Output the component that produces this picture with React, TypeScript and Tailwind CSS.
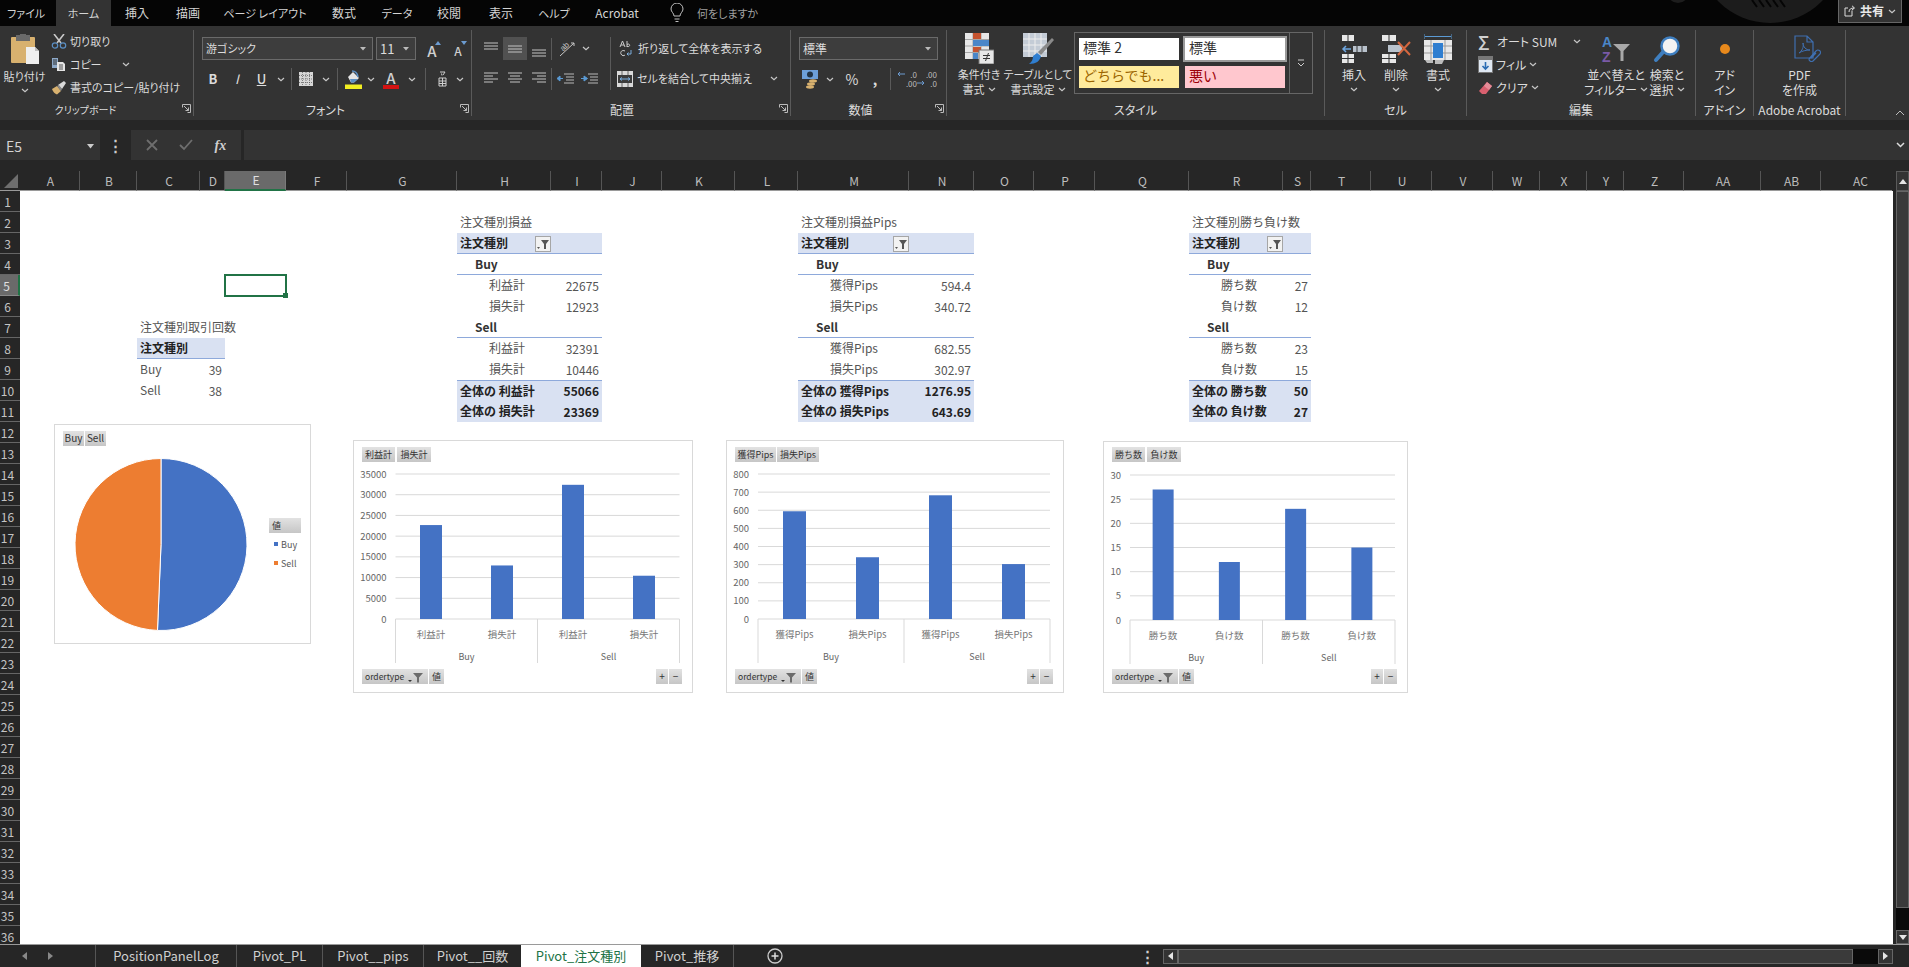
import type { ReactNode } from 'react';

const COLUMNS = ['A','B','C','D','E','F','G','H','I','J','K','L','M','N','O','P','Q','R','S','T','U','V','W','X','Y','Z','AA','AB','AC'];
const ROWS = Array.from({ length: 36 }, (_, i) => i + 1);
const COL_GRID = 'grid-cols-[60px_57px_63px_25px_61px_61px_110px_94px_51px_60px_73px_63px_111px_65px_60px_61px_94px_94px_28px_60px_61px_61px_47px_47px_37px_60px_77px_60px_71px]';

// ---- small ribbon parts ----
function Chevron({ className = '' }: { className?: string }) {
  return (
    <svg width="8" height="5" viewBox="0 0 8 5" className={`shrink-0 ${className}`}>
      <path d="M1 1l3 2.6L7 1" fill="none" stroke="#c8c8c8" strokeWidth="1.2" />
    </svg>
  );
}

function Launcher() {
  return (
    <svg width="9" height="9" viewBox="0 0 9 9" className="absolute bottom-[3px] right-[2px]">
      <path d="M.5 3.5V.5h8v8h-3M2 2l4.5 4.5M6.5 3.5v3h-3" fill="none" stroke="#bbb" strokeWidth="1" />
    </svg>
  );
}

function Group({ width, label, children, labelClass = 'text-[12px]' }: { width: string; label: string; children: ReactNode; labelClass?: string }) {
  return (
    <section className={`relative flex shrink-0 flex-col border-r border-[#5a5a5a] ${width}`}>
      <div className="flex h-[72px]">{children}</div>
      <div className={`h-[14px] whitespace-nowrap text-center leading-[15px] ${labelClass}`}>{label}</div>
    </section>
  );
}

function LargeButton({ width, icon, line1, line2, chevron = true }: { width: string; icon: ReactNode; line1: string; line2?: string; chevron?: boolean }) {
  return (
    <div className={`flex shrink-0 flex-col items-center ${width}`}>
      <div className="flex h-[37px] items-center justify-center">{icon}</div>
      <div className="h-[15px] whitespace-nowrap leading-[15px]">{line1}</div>
      <div className="flex h-[15px] items-center gap-[3px] whitespace-nowrap leading-[15px]">
        {line2}
        {chevron && <Chevron />}
      </div>
    </div>
  );
}

function Combo({ width, text, textClass = '' }: { width: string; text: string; textClass?: string }) {
  return (
    <div className={`flex h-[23px] shrink-0 items-center justify-between border border-[#6a6a6a] bg-[#3d3d3d] pl-[3px] pr-[6px] ${width}`}>
      <span className={textClass}>{text}</span>
      <svg width="6" height="4" viewBox="0 0 6 4"><path d="M0 0h6L3 3.5z" fill="#bbb" /></svg>
    </div>
  );
}

function Cell({ width, children, className = '' }: { width: string; children: ReactNode; className?: string }) {
  return <div className={`flex h-[22px] shrink-0 items-center justify-center ${width} ${className}`}>{children}</div>;
}

function Sep({ height = 'h-[22px]' }: { height?: string }) {
  return <div className={`w-px shrink-0 bg-[#5a5a5a] ${height}`} />;
}

function AlignIcon({ kind }: { kind: 'top' | 'mid' | 'bottom' | 'left' | 'center' | 'right' }) {
  const paths = {
    top: 'M1 3h14M1 6h14M1 9h14',
    mid: 'M1 6h14M1 9h14M1 12h14',
    bottom: 'M1 10h14M1 13h14M1 16h14',
    left: 'M1 3h14M1 6h9M1 9h14M1 12h9',
    center: 'M1 3h14M3 6h10M1 9h14M3 12h10',
    right: 'M1 3h14M6 6h9M1 9h14M6 12h9',
  };
  return (
    <svg width="16" height="17" viewBox="0 0 16 17">
      <path d={paths[kind]} stroke="#c4c4c4" strokeWidth="1" fill="none" />
    </svg>
  );
}

function IndentIcon({ flip }: { flip?: boolean }) {
  return (
    <svg width="17" height="14" viewBox="0 0 17 14">
      <path d="M7 2h10M9 5h8M9 8h8M7 11h10" stroke="#b8b8b8" strokeWidth="1" />
      <path d={flip ? 'M0 6.5h3V4l3.500 2.500L3 9V6.500z' : 'M6 6.500H3V4L0 6.500 3 9V6.500z'} fill="#5b9bd5" stroke="#5b9bd5" />
    </svg>
  );
}

function PasteIcon() {
  return (
    <svg width="30" height="31" viewBox="0 0 30 31">
      <rect x="1" y="3" width="24" height="26" rx="1" fill="#d8b16f" />
      <rect x="6" y="1" width="14" height="6" fill="#6a6a6a" />
      <rect x="10" y="0" width="6" height="3" fill="#6a6a6a" />
      <path d="M16 13h9l4 4v13H16z" fill="#efefef" />
      <path d="M25 13v4h4" fill="#bdbdbd" />
    </svg>
  );
}

function ScissorsIcon() {
  return (
    <svg width="16" height="15" viewBox="0 0 16 15">
      <path d="M3 0l7 9M13 0L6 9" stroke="#c9c9c9" strokeWidth="1.6" fill="none" />
      <circle cx="4" cy="11.500" r="2.700" fill="none" stroke="#5b8fc4" strokeWidth="1.200" />
      <circle cx="12" cy="11.500" r="2.700" fill="none" stroke="#5b8fc4" strokeWidth="1.200" />
    </svg>
  );
}

function CopyIcon() {
  return (
    <svg width="15" height="15" viewBox="0 0 15 15">
      <path d="M1 1h6v10H1z" fill="#8da9c9" />
      <path d="M2 3h4M2 5h4M2 7h4" stroke="#333" />
      <path d="M6 5h6l2 2v7H6z" fill="#e5e5e5" />
      <path d="M8 8h4M8 10h4M8 12h4" stroke="#555" />
    </svg>
  );
}

function BrushIcon() {
  return (
    <svg width="16" height="15" viewBox="0 0 16 15">
      <path d="M1 9l5-3 4 5-4 3.500C4 14 2 12 1 9z" fill="#d8b16f" />
      <path d="M7 5l6-4 2 2-4 6z" fill="#d9d9d9" />
      <path d="M6 6l4 5 1-2-3-4z" fill="#888" />
    </svg>
  );
}

function FontSizeIcon({ up }: { up?: boolean }) {
  return (
    <span className="relative flex h-[20px] w-[20px] items-end justify-center">
      <span className={`${up ? 'text-[15px]' : 'text-[12px]'} font-medium leading-[17px] text-[#cfcfcf]`}>A</span>
      <svg width="6" height="4" viewBox="0 0 6 4" className="absolute right-[1px] top-[2px]">
        <path d={up ? 'M0 4h6L3 0z' : 'M0 0h6L3 4z'} fill="#6c9bd0" />
      </svg>
    </span>
  );
}

function BorderIcon() {
  return (
    <svg width="14" height="14" viewBox="0 0 14 14">
      <rect width="14" height="14" fill="#d6d6d6" />
      <path d="M0 3.500h14M0 7h14M0 10.500h14M3.500 0v14M7 0v14M10.500 0v14" stroke="#555" strokeDasharray="1 1" strokeWidth=".7" />
    </svg>
  );
}

function FillIcon() {
  return (
    <svg width="17" height="19" viewBox="0 0 17 19">
      <path d="M3 7l5-5 6 6-5 4.500H6z" fill="#e5e5e5" />
      <path d="M7 1q5 0 6 6" stroke="#5b8fc4" strokeWidth="1.600" fill="none" />
      <path d="M5 9h8l-4 3.500H6z" fill="#5b8fc4" />
      <rect y="14.500" width="17" height="4.500" fill="#f2ee22" />
    </svg>
  );
}

function FontColorIcon() {
  return (
    <span className="relative flex h-[19px] w-[16px] flex-col items-center">
      <span className="text-[15px] font-medium leading-[15px] text-[#cfcfcf]">A</span>
      <span className="absolute bottom-0 h-[4px] w-[16px] bg-[#d51313]" />
    </span>
  );
}

function PhoneticIcon() {
  return (
    <svg width="9" height="16" viewBox="0 0 9 16">
      <path d="M2 1h5L5 4M3.500 2.500l.5 2" stroke="#cfcfcf" fill="none" />
      <path d="M1 7h7v8H1zM1 10h7M1 12.500h7M4.500 7v8" stroke="#cfcfcf" fill="none" />
    </svg>
  );
}

function WrapIcon() {
  return (
    <svg width="14" height="18" viewBox="0 0 14 18">
      <path d="M1 7l2.500-6L6 7M2 5h3" stroke="#ccc" fill="none" />
      <path d="M8 1v6M8 4.500c3-2 4 3 0 2" stroke="#ccc" fill="none" />
      <path d="M6 11c-3-1.500-5 1-4 3s3 2 4 1" stroke="#ccc" fill="none" />
      <path d="M12 10v4H8M9.500 12.500L8 14l1.500 1.500" stroke="#7daedc" fill="none" />
    </svg>
  );
}

function MergeIcon() {
  return (
    <svg width="16" height="16" viewBox="0 0 16 16">
      <rect width="16" height="16" fill="#d9d9d9" />
      <rect x="1" y="4" width="14" height="8" fill="#3c3c3c" />
      <path d="M5 0v4M11 0v4M5 12v4M11 12v4" stroke="#666" />
      <path d="M3 8h10M3 8l2-1.500M3 8l2 1.500M13 8l-2-1.500M13 8l-2 1.500" stroke="#79aee0" fill="none" />
    </svg>
  );
}

function OrientIcon() {
  return (
    <svg width="18" height="17" viewBox="0 0 18 17" className="overflow-visible">
      <text x="3" y="10" fontSize="8" fill="#c8c8c8" fontFamily="Liberation Sans" transform="rotate(-45 6 8)">ab</text>
      <path d="M2 16L16 3M16 3h-3M16 3v3" stroke="#c8c8c8" fill="none" />
    </svg>
  );
}

function CurrencyIcon() {
  return (
    <svg width="18" height="19" viewBox="0 0 18 19">
      <rect width="16" height="9" fill="#6d9fd8" />
      <circle cx="8" cy="4.500" r="3" fill="#234" />
      <ellipse cx="11" cy="11" rx="4" ry="1.700" fill="#d8b16f" />
      <ellipse cx="9" cy="14" rx="4" ry="1.700" fill="#d8b16f" />
      <ellipse cx="8" cy="17" rx="4" ry="1.700" fill="#d8b16f" />
    </svg>
  );
}

function DecimalIcon({ more }: { more?: boolean }) {
  return (
    <span className="relative block h-[20px] w-[20px] text-[8px] leading-[9px] text-[#bdbdbd]">
      <span className="absolute right-0 top-[1px]">{more ? '.00' : '.0'}</span>
      <span className="absolute right-0 top-[10px]">{more ? '.0' : '.00'}</span>
      <svg width="8" height="6" viewBox="0 0 8 6" className={`absolute left-0 ${more ? 'top-[11px]' : 'top-[2px]'}`}>
        <path d={more ? 'M0 3h7M5 1l2 2-2 2' : 'M8 3H1M3 1L1 3l2 2'} stroke="#6c9bd0" fill="none" />
      </svg>
    </span>
  );
}

function CondFormatIcon() {
  return (
    <svg width="30" height="31" viewBox="0 0 30 31">
      <rect x="1" width="24" height="26" fill="#e7e7e7" />
      <path d="M9 0v26M17 0v26M1 6.500h24M1 13h24M1 19.500h24" stroke="#a5a5a5" />
      <rect x="9" y="0" width="8" height="6" fill="#c5532f" />
      <rect x="9" y="7" width="16" height="6" fill="#4a86c8" />
      <rect x="9" y="14" width="8" height="5" fill="#c5532f" />
      <rect x="9" y="20" width="5" height="6" fill="#4a86c8" />
      <rect x="15" y="17" width="15" height="14" fill="#e7e7e7" stroke="#777" />
      <path d="M19 22.500h7M19 25.500h7M24.500 20l-3 8" stroke="#333" fill="none" />
    </svg>
  );
}

function TableFormatIcon() {
  return (
    <svg width="31" height="32" viewBox="0 0 31 32">
      <rect width="24" height="24" fill="#c4ccd6" />
      <path d="M6 0v24M12 0v24M18 0v24M0 6h24M0 12h24M0 18h24" stroke="#eee" />
      <path d="M29 5l2 2-13 15-3-3z" fill="#8a8a8a" />
      <path d="M14 20l4 3c-1 5-5 8-12 8 3-2 4-5 4-8z" fill="#2f7ed0" />
    </svg>
  );
}

function InsertIcon() {
  return (
    <svg width="26" height="28" viewBox="0 0 26 28">
      <path d="M1 0h12v6H1zM1 19h12v9H1z" fill="#e8e8e8" />
      <path d="M7 0v6M1 23.500h12M7 19v9" stroke="#333" />
      <path d="M12 11h14v6H12z" fill="#b9c2cc" />
      <path d="M16 11v6M21 11v6" stroke="#333" />
      <path d="M10 14H2M5 11l-3 3 3 3" stroke="#6ea6e0" strokeWidth="1.500" fill="none" />
    </svg>
  );
}

function DeleteIcon() {
  return (
    <svg width="30" height="28" viewBox="0 0 30 28">
      <path d="M1 0h14v6H1zM1 19h14v9H1z" fill="#e8e8e8" />
      <path d="M8 0v6M1 23.500h14M8 19v9" stroke="#333" />
      <path d="M7 10h14v7H7z" fill="#b9c2cc" />
      <path d="M17 7l12 13M29 7L17 20" stroke="#d4673f" strokeWidth="2" />
    </svg>
  );
}

function CellFormatIcon() {
  return (
    <svg width="28" height="32" viewBox="0 0 28 32">
      <path d="M0 1v5M28 1v5M1 3.500h26" stroke="#5b9bd5" />
      <rect y="7" width="28" height="20" fill="#e8e8e8" />
      <path d="M7 7v20M21 7v20M0 13h28M0 20h28" stroke="#999" />
      <rect x="9" y="10" width="10" height="15" fill="#2f7ed0" />
      <path d="M1 27h8v3H3zM11 27h9l-2 4h-7z" fill="#bbb" />
    </svg>
  );
}

function FillDownIcon() {
  return (
    <svg width="15" height="17" viewBox="0 0 15 17">
      <rect width="15" height="17" fill="#777" />
      <rect x="1" y="4" width="13" height="12" fill="#dfe8f3" />
      <path d="M7.500 6v7M4.500 10l3 3 3-3" stroke="#2b6cb3" strokeWidth="1.600" fill="none" />
    </svg>
  );
}

function EraserIcon() {
  return (
    <svg width="15" height="14" viewBox="0 0 15 14">
      <path d="M9 1l5 4-6 8H4L1 10z" fill="#d9606f" />
      <path d="M9 1l5 4-3 4-5-4z" fill="#e58b97" />
    </svg>
  );
}

function SortIcon() {
  return (
    <svg width="30" height="30" viewBox="0 0 30 30" className="overflow-visible">
      <text x="1" y="13" fontSize="14" fontWeight="700" fontFamily="Liberation Sans" fill="#4a86c8">A</text>
      <text x="1" y="28" fontSize="14" fontWeight="700" fontFamily="Liberation Sans" fill="#7a5aa6">Z</text>
      <path d="M12 10h17l-6.500 7v10h-3V17z" fill="#a8a8a8" />
    </svg>
  );
}

function FindIcon() {
  return (
    <svg width="28" height="28" viewBox="0 0 28 28">
      <path d="M3 25l8-9" stroke="#3f7fc0" strokeWidth="4" strokeLinecap="round" />
      <circle cx="17" cy="11" r="8.500" fill="#f2f2f2" stroke="#3f7fc0" strokeWidth="2.500" />
    </svg>
  );
}

function PdfIcon() {
  return (
    <svg width="27" height="27" viewBox="0 0 27 27">
      <path d="M1 1h12l6 6v16H1zM13 1v6h6" fill="none" stroke="#3f6fb0" strokeWidth="1.200" />
      <path d="M5 18c3-2 5-6 4-10 0 4 3 7 7 7-4 0-8 1-11 3z" fill="none" stroke="#3f6fb0" />
      <path d="M15 24l7-8a2.500 2.500 0 0 1 4 3l-7 7a2.500 2.500 0 0 1-4-2zM17 23l5-5" fill="none" stroke="#3f6fb0" strokeWidth="1.200" />
    </svg>
  );
}

// ---- ribbon ----
function TitleTabs() {
  const tabs = [
    ['挿入', 'w-[52px]'], ['描画', 'w-[50px]'], ['ページ レイアウト', 'w-[104px] text-[11px]'], ['数式', 'w-[54px]'], ['データ', 'w-[52px] text-[11px]'],
    ['校閲', 'w-[52px]'], ['表示', 'w-[52px]'], ['ヘルプ', 'w-[54px] text-[11px]'], ['Acrobat', 'w-[72px]'],
  ];
  return (
    <div className="relative flex h-[26px] shrink-0 items-center overflow-hidden bg-[#050505] text-[#d4d4d4]">
      <div className="w-[56px] pl-[7px] text-[11px]">ファイル</div>
      <div className="flex h-full w-[55px] items-center justify-center bg-[#333] text-[11px]">ホーム</div>
      {tabs.map(([label, width]) => (
        <div key={label} className={`whitespace-nowrap text-center ${width}`}>{label}</div>
      ))}
      <svg width="16" height="20" viewBox="0 0 16 20" className="ml-[16px]">
        <path d="M5 13c0-3-3-4-3-7a6 6 0 0 1 12 0c0 3-3 4-3 7zM5.500 16h5M6.500 18.500h3" fill="none" stroke="#c0c0c0" />
      </svg>
      <div className="ml-[12px] text-[11px] text-[#a0a0a0]">何をしますか</div>
      {/* 右上の背景模様 */}
      <svg width="240" height="26" viewBox="0 0 240 26" className="absolute left-[1660px] top-0">
        <circle cx="18" cy="-8" r="11" fill="#1d1d1d" />
        <circle cx="110" cy="-49.600" r="72.600" fill="#1c1c1c" />
        <path d="M92 0l5 7M99 0l5 7M106 0l5 7M113 0l5 7M120 0l5 7" stroke="#050505" strokeWidth="2" />
      </svg>
      <div className="absolute left-[1838px] top-0 flex h-[23px] w-[64px] items-center justify-center gap-[4px] border border-[#666] border-t-0 bg-[#333]">
        <svg width="12" height="12" viewBox="0 0 12 12">
          <path d="M8 5.500V11H1V3h3M5 7c0-3 2-4 5-4M8 .800L10.500 3 8 5" fill="none" stroke="#ddd" />
        </svg>
        <span className="font-bold text-[#e8e8e8]">共有</span>
        <Chevron />
      </div>
    </div>
  );
}

function Ribbon() {
  return (
    <div className="flex h-[94px] shrink-0 bg-[#333] pb-[4px] pt-[4px] text-[#dcdcdc]">
      <Group width="w-[194px] text-[11px]" label="クリップボード" labelClass="pr-[22px] text-[10px]">
        <div className="flex w-[50px] shrink-0 flex-col items-center">
          <div className="mt-[4px] flex h-[31px] items-center"><PasteIcon /></div>
          <div className="mt-[3px] whitespace-nowrap pr-[1px] leading-[16px]">貼り付け</div>
          <Chevron className="mt-[4px]" />
        </div>
        <div className="flex flex-col pl-[1px]">
          <div className="flex h-[23px] items-center gap-[3px]"><ScissorsIcon />切り取り</div>
          <div className="flex h-[23px] items-center gap-[4px]"><CopyIcon />コピー<Chevron className="ml-[16px]" /></div>
          <div className="flex h-[23px] items-center gap-[3px] whitespace-nowrap"><BrushIcon />書式のコピー/貼り付け</div>
        </div>
        <Launcher />
      </Group>

      <Group width="w-[278px]" label="フォント" labelClass="pr-[14px] text-[12px]">
        <div className="flex flex-col gap-[8px] pl-[8px] pt-[7px]">
          <div className="flex items-center gap-[3px]">
            <Combo width="w-[171px]" text="游ゴシック" textClass="text-[11px]" />
            <Combo width="w-[40px]" text="11" textClass="text-[13px]" />
            <Cell width="w-[26px]"><FontSizeIcon up /></Cell>
            <Cell width="w-[20px]"><FontSizeIcon /></Cell>
          </div>
          <div className="flex items-center">
            <Cell width="w-[22px]" className="font-bold text-[13px]">B</Cell>
            <Cell width="w-[26px]" className="text-[13px] italic">I</Cell>
            <Cell width="w-[23px]" className="text-[13px] font-medium underline">U</Cell>
            <Cell width="w-[16px]"><Chevron /></Cell>
            <Cell width="w-[4px]"><Sep /></Cell>
            <Cell width="w-[26px]"><BorderIcon /></Cell>
            <Cell width="w-[14px]"><Chevron /></Cell>
            <Cell width="w-[8px]"><Sep /></Cell>
            <Cell width="w-[24px]"><FillIcon /></Cell>
            <Cell width="w-[12px]"><Chevron /></Cell>
            <Cell width="w-[28px]"><FontColorIcon /></Cell>
            <Cell width="w-[14px]"><Chevron /></Cell>
            <Cell width="w-[12px]"><Sep /></Cell>
            <Cell width="w-[22px]"><PhoneticIcon /></Cell>
            <Cell width="w-[14px]"><Chevron /></Cell>
          </div>
        </div>
        <Launcher />
      </Group>

      <Group width="w-[319px]" label="配置" labelClass="pr-[18px] text-[12px]">
        <div className="flex flex-col gap-[7px] pl-[7px] pt-[7px]">
          <div className="flex h-[23px] items-center">
            <Cell width="w-[24px]"><AlignIcon kind="top" /></Cell>
            <Cell width="w-[24px]" className="!h-[23px] bg-[#515151]"><AlignIcon kind="mid" /></Cell>
            <Cell width="w-[24px]"><AlignIcon kind="bottom" /></Cell>
            <Sep />
            <Cell width="w-[30px]"><OrientIcon /></Cell>
            <Chevron />
          </div>
          <div className="flex h-[23px] items-center">
            <Cell width="w-[24px]"><AlignIcon kind="left" /></Cell>
            <Cell width="w-[24px]"><AlignIcon kind="center" /></Cell>
            <Cell width="w-[24px]"><AlignIcon kind="right" /></Cell>
            <Sep />
            <Cell width="w-[26px]"><IndentIcon /></Cell>
            <Cell width="w-[22px]"><IndentIcon flip /></Cell>
          </div>
        </div>
        <div className="ml-[10px] mt-[7px] h-[53px] w-px bg-[#5a5a5a]" />
        <div className="flex flex-col gap-[7px] pl-[6px] pt-[7px] text-[11px]">
          <div className="flex h-[23px] items-center gap-[5px] whitespace-nowrap pl-[2px]"><WrapIcon />折り返して全体を表示する</div>
          <div className="flex h-[23px] items-center gap-[4px] whitespace-nowrap"><MergeIcon />セルを結合して中央揃え<Chevron className="ml-[14px]" /></div>
        </div>
        <Launcher />
      </Group>

      <Group width="w-[156px]" label="数値" labelClass="pr-[16px] text-[12px]">
        <div className="flex flex-col gap-[8px] pl-[8px] pt-[7px]">
          <Combo width="w-[139px]" text="標準" />
          <div className="flex items-center">
            <Cell width="w-[24px]"><CurrencyIcon /></Cell>
            <Cell width="w-[14px]"><Chevron /></Cell>
            <Cell width="w-[30px]" className="text-[14px]">%</Cell>
            <Cell width="w-[16px]" className="font-bold text-[14px]">,</Cell>
            <Cell width="w-[14px]"><Sep /></Cell>
            <Cell width="w-[20px]"><DecimalIcon /></Cell>
            <Cell width="w-[20px]"><DecimalIcon more /></Cell>
          </div>
        </div>
        <Launcher />
      </Group>

      <Group width="w-[378px]" label="スタイル">
        <div className="flex pl-[6px] text-[11px]">
          <LargeButton width="w-[52px]" icon={<CondFormatIcon />} line1="条件付き" line2="書式" />
          <LargeButton width="w-[66px]" icon={<TableFormatIcon />} line1="テーブルとして" line2="書式設定" />
        </div>
        <div className="ml-[3px] mt-[2px] flex h-[62px] w-[239px] border border-[#666]">
          <div className="grid w-[214px] shrink-0 grid-cols-[100px_100px] grid-rows-[22px_22px] gap-x-[6px] gap-y-[6px] pl-[4px] pt-[5px] text-[14px] leading-[19px] [font-feature-settings:normal]">
            <div className="bg-white px-[4px] text-[#333]">標準 2</div>
            <div className="bg-white px-[4px] text-[#333] outline-2 outline-[#9a9a9a]">標準</div>
            <div className="bg-[#ffeb9c] px-[4px] text-[#9c6500]">どちらでも...</div>
            <div className="bg-[#ffc7ce] px-[4px] text-[#9c0006]">悪い</div>
          </div>
          <div className="flex flex-1 items-center justify-center border-l border-[#666]">
            <svg width="8" height="8" viewBox="0 0 8 8"><path d="M1 1h6M1 4l3 3 3-3" fill="none" stroke="#ccc" /></svg>
          </div>
        </div>
      </Group>

      <Group width="w-[142px]" label="セル">
        <div className="flex pl-[8px]">
          <LargeButton width="w-[42px]" icon={<InsertIcon />} line1="挿入" />
          <LargeButton width="w-[42px]" icon={<DeleteIcon />} line1="削除" />
          <LargeButton width="w-[42px]" icon={<CellFormatIcon />} line1="書式" />
        </div>
      </Group>

      <Group width="w-[229px]" label="編集">
        <div className="flex w-[120px] shrink-0 flex-col pl-[11px]">
          <div className="flex h-[23px] items-center gap-[3px] whitespace-nowrap">
            <span className="w-[16px] text-[19px] font-medium leading-[20px] text-[#d0d0d0]">Σ</span>オート SUM<Chevron className="ml-[13px]" />
          </div>
          <div className="flex h-[23px] items-center gap-[3px]"><FillDownIcon />フィル<Chevron /></div>
          <div className="flex h-[23px] items-center gap-[3px]"><EraserIcon />クリア<Chevron /></div>
        </div>
        <LargeButton width="w-[58px]" icon={<SortIcon />} line1="並べ替えと" line2="フィルター" />
        <LargeButton width="w-[44px]" icon={<FindIcon />} line1="検索と" line2="選択" />
      </Group>

      <Group width="w-[58px]" label="アドイン">
        <div className="flex w-full flex-col items-center">
          <div className="flex h-[37px] items-center">
            <span className="h-[10px] w-[10px] rounded-full bg-[#e8891c]" />
          </div>
          <div className="h-[15px] leading-[15px]">アド</div>
          <div className="h-[15px] leading-[15px]">イン</div>
        </div>
      </Group>

      <Group width="w-[92px]" label="Adobe Acrobat">
        <div className="flex w-full flex-col items-center">
          <div className="flex h-[37px] items-center pl-[16px]"><PdfIcon /></div>
          <div className="h-[15px] leading-[15px]">PDF</div>
          <div className="h-[15px] leading-[15px]">を作成</div>
        </div>
      </Group>

      <div className="flex flex-1 items-end justify-end pr-[4px]">
        <svg width="10" height="6" viewBox="0 0 10 6"><path d="M1 5l4-4 4 4" fill="none" stroke="#bbb" /></svg>
      </div>
    </div>
  );
}

function FormulaBar() {
  return (
    <div className="flex h-[51px] shrink-0 items-start bg-[#262626] pt-[10px]">
      <div className="flex h-[30px] w-[100px] items-center justify-between bg-[#333] pl-[6px] pr-[6px] pt-[2px] text-[14px] text-[#d4d4d4]">
        E5
        <svg width="7" height="5" viewBox="0 0 7 5"><path d="M0 0h7L3.500 4.500z" fill="#ccc" /></svg>
      </div>
      <div className="flex h-[30px] w-[31px] items-center justify-center text-[15px] font-bold text-[#ccc]">⋮</div>
      <div className="flex h-[30px] w-[110px] items-center justify-around bg-[#333] px-[4px]">
        <svg width="12" height="12" viewBox="0 0 12 12"><path d="M1 1l10 10M11 1L1 11" stroke="#6e6e6e" strokeWidth="1.800" /></svg>
        <svg width="14" height="12" viewBox="0 0 14 12"><path d="M1 6l4 4 8-9" fill="none" stroke="#6e6e6e" strokeWidth="1.800" /></svg>
        <span className="font-['Liberation_Serif',serif] text-[14px] font-bold italic text-[#cfcfcf]">fx</span>
      </div>
      <div className="ml-[3px] flex h-[30px] flex-1 items-center justify-end bg-[#333] pr-[4px]">
        <svg width="9" height="6" viewBox="0 0 9 6"><path d="M1 1l3.500 3.500L8 1" fill="none" stroke="#ddd" strokeWidth="1.500" /></svg>
      </div>
    </div>
  );
}

// ---- pivots ----
type PivotGroup = { name: string; rows: [string, string][] };

function FilterButton() {
  return (
    <span className="absolute right-0 top-[3px] flex h-[16px] w-[16px] items-center justify-center border border-[#a6a6a6] bg-[#f2f2f2]">
      <svg width="12" height="11" viewBox="0 0 12 11">
        <path d="M4 1h8L9 5v5H7V5z" fill="#555" />
        <path d="M0 8h3L1.500 10z" fill="#555" />
      </svg>
    </span>
  );
}

function PivotRow({ left, right, className = '', leftClass = 'pl-[3px]', filter }: { left: string; right?: string; className?: string; leftClass?: string; filter?: boolean }) {
  return (
    <div className={`col-span-2 grid grid-cols-subgrid items-center whitespace-nowrap leading-[20px] ${className}`}>
      <div className={`relative h-full ${leftClass}`}>
        {left}
        {filter && <FilterButton />}
      </div>
      <div className="pr-[3px] text-right">{right}</div>
    </div>
  );
}

const HEAD = 'bg-[#d9e1f2] border-b border-[#8ea9db] font-bold text-[#222]';

function Pivot({ place, title, groups, totals }: { place: string; title: string; groups: PivotGroup[]; totals: [string, string][] }) {
  return (
    <div className={`grid grid-cols-subgrid grid-rows-subgrid text-[12px] text-[#555] ${place}`}>
      <PivotRow left={title} />
      <PivotRow left="注文種別" className={HEAD} filter />
      {groups.map((group) => (
        <div key={group.name} className="contents">
          <PivotRow left={group.name} className="border-b border-[#8ea9db] font-semibold text-[#333]" leftClass="pl-[18px]" />
          {group.rows.map(([label, value]) => (
            <PivotRow key={label} left={label} right={value} leftClass="pl-[32px]" />
          ))}
        </div>
      ))}
      {totals.map(([label, value], i) => (
        <PivotRow key={label} left={label} right={value} className={`bg-[#d9e1f2] font-bold text-[#222] ${i === 0 ? 'border-t border-[#8ea9db]' : ''}`} />
      ))}
    </div>
  );
}

// ---- charts ----
function FieldButton({ x, y, w, label, size = 9, anchor = 'middle' }: { x: number; y: number; w: number; label: string; size?: number; anchor?: 'middle' | 'start' }) {
  return (
    <g>
      <rect x={x} y={y} width={w} height={15} fill="url(#fieldButton)" />
      <text x={anchor === 'middle' ? x + w / 2 : x + 3} y={y + 11} fontSize={size} textAnchor={anchor} fill="#333">{label}</text>
    </g>
  );
}

function ButtonGradient() {
  return (
    <defs>
      <linearGradient id="fieldButton" x1="0" y1="0" x2="0" y2="1">
        <stop offset="0" stopColor="#e2e2e2" />
        <stop offset="1" stopColor="#c6c6c6" />
      </linearGradient>
    </defs>
  );
}

type BarChartProps = {
  place: string;
  frame: [number, number, number, number];
  plot: [number, number, number, number];
  ticks: string[];
  max: number;
  values: number[];
  labels: [string, string];
  barWidth: number;
  seriesButtons: [number, number, string][];
  footer: [number, number, number];
};

function BarChart({ place, frame, plot, ticks, max, values, labels, barWidth, seriesButtons, footer }: BarChartProps) {
  const [x0, y0, x1, y1] = frame;
  const [left, right, top, bottom] = plot;
  const cell = (right - left) / 4;
  const [ordertypeX, ordertypeW, plusX] = footer;
  const footY = y1 - 24;
  return (
    <div className={`absolute border border-[#d9d9d9] bg-white ${place}`}>
      <svg viewBox={`${x0 + 1} ${y0 + 1} ${x1 - x0 - 2} ${y1 - y0 - 2}`} className="block h-full w-full">
        <ButtonGradient />
        {seriesButtons.map(([x, w, label]) => (
          <FieldButton key={label} x={x} y={447} w={w} label={label} />
        ))}
        {ticks.map((tick, i) => {
          const y = bottom - ((bottom - top) * i) / (ticks.length - 1);
          return (
            <g key={tick}>
              <line x1={left} x2={right} y1={y} y2={y} stroke="#d9d9d9" />
              <text x={left - 9} y={y + 3.500} fontSize="9.500" textAnchor="end" fill="#666">{tick}</text>
            </g>
          );
        })}
        {values.map((value, i) => {
          const h = (value / max) * (bottom - top);
          return <rect key={i} x={left + cell * (i + 0.5) - barWidth / 2} y={bottom - h} width={barWidth} height={h} fill="#4472c4" />;
        })}
        <path d={`M${left} ${bottom}V${bottom + 44}M${left + cell * 2} ${bottom}V${bottom + 44}M${right} ${bottom}V${bottom + 44}`} stroke="#d9d9d9" fill="none" />
        {[0, 1, 2, 3].map((i) => (
          <text key={i} x={left + cell * (i + 0.5)} y={bottom + 19} fontSize="9.500" textAnchor="middle" fill="#777">{labels[i % 2]}</text>
        ))}
        <text x={left + cell} y={bottom + 41} fontSize="9" textAnchor="middle" fill="#666">Buy</text>
        <text x={left + cell * 3} y={bottom + 41} fontSize="9" textAnchor="middle" fill="#666">Sell</text>
        <FieldButton x={ordertypeX} y={footY} w={ordertypeW} label="ordertype" size={8.5} anchor="start" />
        <path d={`M${ordertypeX + ordertypeW - 15} ${footY + 4}h10l-4 4.500v5h-2v-5z`} fill="#6b6b6b" />
        <path d={`M${ordertypeX + ordertypeW - 20} ${footY + 11}h4l-2 2z`} fill="#333" />
        <FieldButton x={ordertypeX + ordertypeW + 1} y={footY} w={15} label="値" />
        <FieldButton x={plusX} y={footY} w={12} label="+" size={10} />
        <FieldButton x={plusX + 13} y={footY} w={13} label="−" size={10} />
      </svg>
    </div>
  );
}

function PieChart() {
  // 39 / 77 を上から時計回りに
  const cx = 161;
  const cy = 544.5;
  const r = 86;
  const angle = (39 / 77) * Math.PI * 2;
  const ex = cx + r * Math.sin(angle);
  const ey = cy - r * Math.cos(angle);
  return (
    <div className="absolute left-[34px] top-[233px] h-[220px] w-[257px] border border-[#d9d9d9] bg-white">
      <svg viewBox="55 425 255 218" className="block h-full w-full">
        <ButtonGradient />
        <FieldButton x={63} y={431} w={21} label="Buy" size={10} />
        <FieldButton x={85} y={431} w={21} label="Sell" size={10} />
        <path d={`M${cx} ${cy}L${cx} ${cy - r}A${r} ${r} 0 1 1 ${ex} ${ey}Z`} fill="#4472c4" stroke="#fff" />
        <path d={`M${cx} ${cy}L${ex} ${ey}A${r} ${r} 0 0 1 ${cx} ${cy - r}Z`} fill="#ed7d31" stroke="#fff" />
        <FieldButton x={269} y={518} w={32} label="値" anchor="start" />
        <rect x={274} y={542} width={4} height={4} fill="#4472c4" />
        <text x={281} y={548} fontSize="9" fill="#595959">Buy</text>
        <rect x={274} y={561} width={4} height={4} fill="#ed7d31" />
        <text x={281} y={567} fontSize="9" fill="#595959">Sell</text>
      </svg>
    </div>
  );
}

// ---- sheet ----
function ColumnHeader() {
  return (
    <div className="flex h-[20px] shrink-0 bg-[#262626]">
      <div className="flex w-[20px] shrink-0 items-end justify-end border-b border-[#9a9a9a] pb-[2px] pr-[2px]">
        <svg width="14" height="14" viewBox="0 0 14 14"><path d="M14 0v14H0z" fill="#6e6e6e" /></svg>
      </div>
      <div className={`grid flex-1 ${COL_GRID} justify-start`}>
        {COLUMNS.map((col) => (
          <div
            key={col}
            className={`flex items-center justify-center border-r pl-[2px] text-[12px] leading-none text-[#bdbdbd] ${col === 'E' ? 'border-[#7a7a7a] border-b-2 border-b-[#217346] bg-[#6a6a6a] text-[#e0e0e0]' : 'border-b border-r-[#555] border-b-[#9a9a9a]'} ${col === 'AC' ? 'border-r-0 pl-[8px]' : ''}`}
          >
            {col}
          </div>
        ))}
      </div>
      <div className="mr-0 flex w-[13px] shrink-0 items-center justify-center border border-[#5a5a5a] bg-[#333]">
        <svg width="8" height="5" viewBox="0 0 8 5"><path d="M0 5h8L4 0z" fill="#e5e5e5" /></svg>
      </div>
    </div>
  );
}

function Sheet() {
  return (
    <div className="flex h-[753px] shrink-0 bg-[#262626]">
      <div className="h-full w-[20px] shrink-0 overflow-hidden">
        {ROWS.map((row) => (
          <div
            key={row}
            className={`h-[21px] border-b pr-[5px] pt-[1px] text-center text-[12px] leading-[20px] ${row === 5 ? 'border-r-2 border-b-[#888] border-r-[#217346] bg-[#6a6a6a] text-[#e0e0e0]' : 'border-[#666] text-[#c4c4c4]'}`}
          >
            {row}
          </div>
        ))}
      </div>

      <div className={`relative grid w-[1873px] shrink-0 ${COL_GRID} grid-rows-[repeat(36,21px)] overflow-hidden bg-white`}>
        <div className="relative col-start-5 row-start-5 -m-[1px] border-2 border-[#217346]">
          <span className="absolute -bottom-[3px] -right-[3px] h-[5px] w-[5px] bg-[#217346]" />
        </div>

        <div className="col-span-2 col-start-3 row-span-4 row-start-7 grid grid-cols-subgrid grid-rows-subgrid text-[12px] text-[#555]">
          <PivotRow left="注文種別取引回数" />
          <PivotRow left="注文種別" className={HEAD} />
          <PivotRow left="Buy" right="39" />
          <PivotRow left="Sell" right="38" />
        </div>

        <Pivot
          place="col-span-2 col-start-8 row-span-10 row-start-2"
          title="注文種別損益"
          groups={[
            { name: 'Buy', rows: [['利益計', '22675'], ['損失計', '12923']] },
            { name: 'Sell', rows: [['利益計', '32391'], ['損失計', '10446']] },
          ]}
          totals={[['全体の 利益計', '55066'], ['全体の 損失計', '23369']]}
        />
        <Pivot
          place="col-span-2 col-start-13 row-span-10 row-start-2"
          title="注文種別損益Pips"
          groups={[
            { name: 'Buy', rows: [['獲得Pips', '594.4'], ['損失Pips', '340.72']] },
            { name: 'Sell', rows: [['獲得Pips', '682.55'], ['損失Pips', '302.97']] },
          ]}
          totals={[['全体の 獲得Pips', '1276.95'], ['全体の 損失Pips', '643.69']]}
        />
        <Pivot
          place="col-span-2 col-start-18 row-span-10 row-start-2"
          title="注文種別勝ち負け数"
          groups={[
            { name: 'Buy', rows: [['勝ち数', '27'], ['負け数', '12']] },
            { name: 'Sell', rows: [['勝ち数', '23'], ['負け数', '15']] },
          ]}
          totals={[['全体の 勝ち数', '50'], ['全体の 負け数', '27']]}
        />

        <PieChart />
        <BarChart
          place="left-[333px] top-[249px] h-[253px] w-[340px]"
          frame={[353, 440, 693, 693]}
          plot={[395.5, 679.5, 474, 619]}
          ticks={['0', '5000', '10000', '15000', '20000', '25000', '30000', '35000']}
          max={35000}
          values={[22675, 12923, 32391, 10446]}
          labels={['利益計', '損失計']}
          barWidth={22}
          seriesButtons={[[362, 33, '利益計'], [397, 34, '損失計']]}
          footer={[362, 66, 656]}
        />
        <BarChart
          place="left-[706px] top-[249px] h-[253px] w-[338px]"
          frame={[726, 440, 1064, 693]}
          plot={[758, 1050, 474, 619]}
          ticks={['0', '100', '200', '300', '400', '500', '600', '700', '800']}
          max={800}
          values={[594.4, 340.72, 682.55, 302.97]}
          labels={['獲得Pips', '損失Pips']}
          barWidth={23}
          seriesButtons={[[735, 41, '獲得Pips'], [777, 42, '損失Pips']]}
          footer={[735, 66, 1027]}
        />
        <BarChart
          place="left-[1083px] top-[250px] h-[252px] w-[305px]"
          frame={[1103, 441, 1408, 693]}
          plot={[1130, 1395, 475, 620]}
          ticks={['0', '5', '10', '15', '20', '25', '30']}
          max={30}
          values={[27, 12, 23, 15]}
          labels={['勝ち数', '負け数']}
          barWidth={21}
          seriesButtons={[[1112, 33, '勝ち数'], [1147, 34, '負け数']]}
          footer={[1112, 66, 1371]}
        />
      </div>

      <div className="w-[3px] shrink-0 bg-[#262626]" />
      <div className="flex w-[13px] shrink-0 flex-col">
        <div className="h-[717px] border border-[#666] bg-[#3a3a3a]" />
        <div className="flex-1 bg-[#0a0a0a]" />
        <div className="flex h-[14px] items-center justify-center border border-[#666] bg-[#333]">
          <svg width="8" height="5" viewBox="0 0 8 5"><path d="M0 0h8L4 5z" fill="#e5e5e5" /></svg>
        </div>
      </div>
    </div>
  );
}

function SheetTabs() {
  const tabs: [string, string][] = [
    ['PositionPanelLog', 'w-[141px]'],
    ['Pivot_PL', 'w-[86px]'],
    ['Pivot__pips', 'w-[101px]'],
    ['Pivot__回数', 'w-[98px]'],
  ];
  return (
    <div className="flex h-[23px] shrink-0 items-center border-t border-[#9a9a9a] bg-[#262626] text-[13px] text-[#d0d0d0]">
      <div className="flex h-full w-[95px] items-center gap-[21px] pl-[22px]">
        <svg width="5" height="8" viewBox="0 0 5 8"><path d="M5 0v8L0 4z" fill="#888" /></svg>
        <svg width="5" height="8" viewBox="0 0 5 8"><path d="M0 0v8l5-4z" fill="#888" /></svg>
      </div>
      {tabs.map(([label, width]) => (
        <div key={label} className={`flex h-full items-center justify-center border-l border-[#555] ${width}`}>{label}</div>
      ))}
      <div className="flex h-full w-[120px] items-center justify-center bg-white text-[#217346]">Pivot_注文種別</div>
      <div className="flex h-full w-[93px] items-center justify-center border-r border-[#555]">Pivot_推移</div>
      <svg width="16" height="16" viewBox="0 0 16 16" className="ml-[33px]">
        <circle cx="8" cy="8" r="7" fill="none" stroke="#ccc" strokeWidth="1.300" />
        <path d="M8 4.500v7M4.500 8h7" stroke="#ddd" strokeWidth="1.500" />
      </svg>
      <div className="ml-[356px] w-[17px] text-center text-[15px] font-bold">⋮</div>
      <div className="ml-[7px] flex h-[15px] w-[730px]">
        <div className="flex w-[15px] items-center justify-center border border-[#666] bg-[#333]">
          <svg width="5" height="8" viewBox="0 0 5 8"><path d="M5 0v8L0 4z" fill="#e5e5e5" /></svg>
        </div>
        <div className="w-[675px] border border-[#666] bg-[#3a3a3a]" />
        <div className="w-[25px] bg-[#0a0a0a]" />
        <div className="flex w-[15px] items-center justify-center border border-[#666] bg-[#333]">
          <svg width="5" height="8" viewBox="0 0 5 8"><path d="M0 0v8l5-4z" fill="#e5e5e5" /></svg>
        </div>
      </div>
    </div>
  );
}

export default function App() {
  return (
    <div className="flex h-[967px] w-[1909px] flex-col overflow-hidden bg-[#262626] font-['Noto_Sans_CJK_JP','Noto_Sans',sans-serif] text-[12px]">
      <div className="flex flex-col [font-feature-settings:'palt']">
        <TitleTabs />
        <Ribbon />
        <FormulaBar />
      </div>
      <ColumnHeader />
      <Sheet />
      <SheetTabs />
    </div>
  );
}
